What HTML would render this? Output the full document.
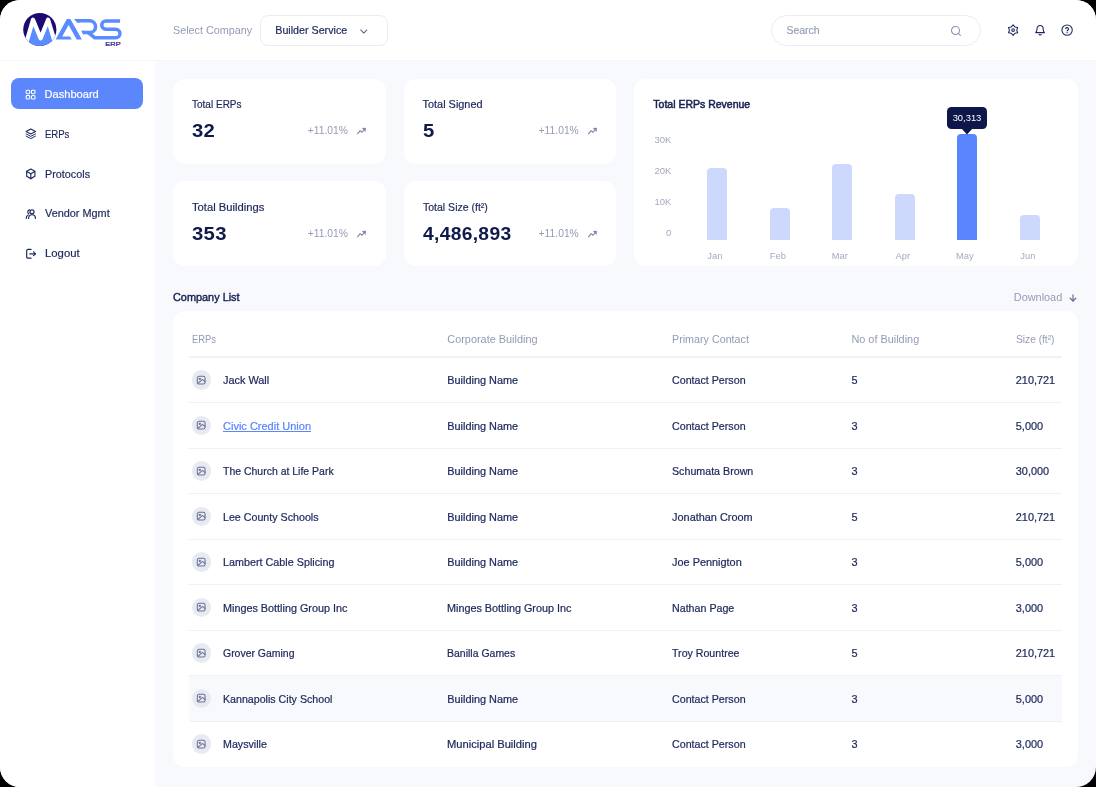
<!DOCTYPE html>
<html>
<head>
<meta charset="utf-8">
<title>MARS ERP Dashboard</title>
<style>
*{box-sizing:border-box;margin:0;padding:0}
html,body{width:1096px;height:787px;overflow:hidden;background:#000}
body{font-family:"Liberation Sans",sans-serif;font-size:11px;color:#1d285b;position:relative}
#app{will-change:transform;position:absolute;left:0;top:0;width:1096px;height:787px;background:#f8f9fd;border-radius:20px;overflow:hidden}
#header{position:absolute;left:0;top:0;width:1096px;height:61px;background:#fff;border-bottom:1px solid #f5f6fa}
#sidebar{position:absolute;left:0;top:61px;width:155px;height:726px;background:#fff}
.t{position:absolute;white-space:nowrap;line-height:14px;height:14px;font-size:10.9px}
.gray{color:#949bb5}
.card{position:absolute;background:#fff;border-radius:12px}
.nav{position:absolute;left:44.5px;font-size:11.1px;line-height:14px;white-space:nowrap;color:#1d285b;-webkit-text-stroke:0.2px currentColor}
.ico{position:absolute}
.big{position:absolute;font-weight:bold;font-size:18.6px;line-height:24px;color:#0f1a4a;white-space:nowrap;letter-spacing:0.3px;transform-origin:0 50%;transform:scaleX(1.09)}
.pct{position:absolute;font-size:10.3px;line-height:14px;color:#949bb5;white-space:nowrap}
.ylab{position:absolute;left:641px;width:30.3px;text-align:right;font-size:9.5px;line-height:12px;color:#a3a9c0}
.xlab{position:absolute;width:40px;text-align:center;font-size:9.4px;line-height:12px;color:#a5abc2;top:249.5px}
.bar{position:absolute;width:20px;background:#cdd9fc;border-radius:4px 4px 0 0}
.row{position:absolute;left:189px;width:873px;height:45.5px;border-top:1px solid #f0f1f6}
.c{position:absolute;line-height:14px;-webkit-text-stroke:0.22px currentColor;font-size:10.9px;white-space:nowrap;color:#1d285b}
.av{position:absolute;left:191.6px;width:19.5px;height:19.5px;border-radius:50%;background:#e8eaf1}
.av svg{position:absolute;left:4.4px;top:4.5px}
.th{position:absolute;top:331.7px;line-height:14px;font-size:10.9px;color:#949bb5;white-space:nowrap}
</style>
</head>
<body>
<div id="app">

<div id="header">

<svg class="ico" style="left:18px;top:8px" width="110" height="44" viewBox="18 8 110 44">
  <defs><clipPath id="lc"><circle cx="39.8" cy="29.5" r="16.6"/></clipPath></defs>
  <circle cx="39.8" cy="29.5" r="16.6" fill="#1c0a70"/>
  <g clip-path="url(#lc)">
    <polygon points="27.3,39.5 33,19.8 40.6,38.3 48.1,19.8 54.1,39.5 60,50 20,50" fill="#5b8cff"/>
    <polyline points="26.7,41.5 33,19.8 40.6,38.3 48.1,19.8 54.7,41.5" fill="none" stroke="#fff" stroke-width="4.3" stroke-linejoin="round" stroke-linecap="butt"/>
  </g>
  <polygon fill="#5b8cff" points="55.6,39.6 66.8,18.9 70.4,18.9 81.9,39.6 76.7,39.6 68.6,25.1 62.2,36.6 70.1,36.6 71.7,39.6"/>
  <polygon fill="#5b8cff" points="74,19 77,22.5 80,22.5 80,19"/>
  <g fill="none" stroke="#5b8cff" stroke-width="3.5" stroke-linejoin="round">
    <path d="M77,20.75 H90.2 A5.9,5.9 0 0 1 90.2,32.5 H82.6"/>
    <path d="M88.4,32.6 L94.8,37.85 H115.6 A4.35,4.35 0 0 0 115.6,29.15 H105.8 A4.1,4.1 0 0 1 105.8,20.95 H120.1"/>
  </g>
  <polygon fill="#5b8cff" points="81.2,30.75 83.2,34.25 84,34.25 84,30.75"/>
  <text x="105.3" y="45.8" font-family="Liberation Sans" font-weight="normal" stroke="#2a1a7c" stroke-width="0.18" font-size="5.3" fill="#2a1a7c" textLength="15.6" lengthAdjust="spacingAndGlyphs">ERP</text>
</svg>

<div class="t gray" style="left:173px;top:23px;font-size:10.8px">Select Company</div>
<div style="position:absolute;left:260px;top:15px;width:128px;height:30.5px;border:1px solid #ebedf4;border-radius:8px;background:#fff"></div>
<div class="t" style="left:275.3px;top:23px;font-size:10.7px;color:#1d285b;-webkit-text-stroke:0.2px #1d285b">Builder Service</div>
<svg class="ico" style="left:360.2px;top:28.7px" width="7.6" height="5" viewBox="0 0 10 6" fill="none" stroke="#5a6389" stroke-width="1.4" stroke-linecap="round" stroke-linejoin="round"><path d="M1 1 L5 5 L9 1"/></svg>
<div style="position:absolute;left:771px;top:15px;width:209.5px;height:30.5px;border:1px solid #ebedf4;border-radius:16px;background:#fff"></div>
<div class="t gray" style="left:786.4px;top:23px;font-size:10.5px;-webkit-text-stroke:0.15px currentColor">Search</div>
<svg class="ico" style="left:950px;top:24.6px" width="12" height="12" viewBox="0 0 24 24" fill="none" stroke="#8a91ae" stroke-width="2.1" stroke-linecap="round" stroke-linejoin="round"><circle cx="11" cy="11" r="8"/><path d="M21 21 L16.7 16.7"/></svg>
<svg class="ico" style="left:1006.6px;top:24.4px" width="12.2" height="12.2" viewBox="0 0 24 24" fill="none" stroke="#1d285b" stroke-width="2.1" stroke-linecap="round" stroke-linejoin="round"><circle cx="12" cy="12" r="2.6"/><path d="M12.00 1.60 L15.60 5.76 L21.01 6.80 L19.20 12.00 L21.01 17.20 L15.60 18.24 L12.00 22.40 L8.40 18.24 L2.99 17.20 L4.80 12.00 L2.99 6.80 L8.40 5.76 Z"/></svg>
<svg class="ico" style="left:1034.1px;top:24.4px" width="12.2" height="12.2" viewBox="0 0 24 24" fill="none" stroke="#1d285b" stroke-width="2.1" stroke-linecap="round" stroke-linejoin="round"><path d="M6 9 a6 6 0 0 1 12 0 c0 6 2.5 7.5 2.5 8 H3.5 c0 -0.5 2.5 -2 2.5 -8 Z"/><path d="M10 20.5 a2.2 2.2 0 0 0 4 0"/></svg>
<svg class="ico" style="left:1061.4px;top:24.4px" width="12.2" height="12.2" viewBox="0 0 24 24" fill="none" stroke="#1d285b" stroke-width="2.1" stroke-linecap="round" stroke-linejoin="round"><circle cx="12" cy="12" r="10.2"/><path d="M9.2 9.3 a2.9 2.9 0 0 1 5.7 0.8 c0 1.9 -2.9 2.2 -2.9 3.6"/><path d="M12 16.9 v0.2" stroke-width="2.6"/></svg>
</div>

<div id="sidebar"><div style="position:absolute;left:10.7px;top:17.4px;width:132.8px;height:30.7px;border-radius:8px;background:#5b86fc"></div><svg class="ico" style="left:25.2px;top:27.5px" width="11.2" height="11.2" viewBox="0 0 24 24" fill="none" stroke="#fff" stroke-width="2.3" stroke-linecap="round" stroke-linejoin="round"><rect x="2.5" y="2.5" width="7.6" height="7.6" rx="2"/><rect x="13.9" y="2.5" width="7.6" height="7.6" rx="2"/><rect x="2.5" y="13.9" width="7.6" height="7.6" rx="2"/><rect x="13.9" y="13.9" width="7.6" height="7.6" rx="2.2"/></svg><div class="nav" style="top:26.4px;color:#fff">Dashboard</div><svg class="ico" style="left:25px;top:67.3px" width="11.6" height="11.6" viewBox="0 0 24 24" fill="none" stroke="#1d285b" stroke-width="2.4" stroke-linecap="round" stroke-linejoin="round"><path d="M12 2.2 L21.8 7.4 L12 12.6 L2.2 7.4 Z" stroke-width="2.2"/><path d="M2.4 12.3 L12 17.3 L21.6 12.3" stroke-width="2"/><path d="M2.4 16.9 L12 21.9 L21.6 16.9" stroke-width="2"/></svg><div class="nav" style="top:65.8px;transform-origin:0 50%;transform:scaleX(0.86)">ERPs</div><svg class="ico" style="left:25px;top:107.00000000000001px" width="11.6" height="11.6" viewBox="0 0 24 24" fill="none" stroke="#1d285b" stroke-width="2.4" stroke-linecap="round" stroke-linejoin="round"><path d="M12 2 L20.5 6.8 V17.2 L12 22 L3.5 17.2 V6.8 Z"/><path d="M3.8 7 L12 11.8 L20.2 7"/><path d="M12 11.8 V22"/></svg><div class="nav" style="top:105.5px;transform-origin:0 50%;transform:scaleX(0.975)">Protocols</div><svg class="ico" style="left:25px;top:146.7px" width="11.6" height="11.6" viewBox="0 0 24 24" fill="none" stroke="#1d285b" stroke-width="2.4" stroke-linecap="round" stroke-linejoin="round"><circle cx="14.5" cy="8" r="4.2"/><path d="M7.5 21.5 c0 -5 3 -7.5 7 -7.5 s7 2.5 7 7.5"/><path d="M9.6 4 a4.2 4.2 0 0 0 -1.6 7.9"/><path d="M6.6 14.4 c-2.4 1 -4 3.4 -4 7"/></svg><div class="nav" style="top:145.2px;transform-origin:0 50%;transform:scaleX(0.98)">Vendor Mgmt</div><svg class="ico" style="left:25px;top:186.5px" width="11.6" height="11.6" viewBox="0 0 24 24" fill="none" stroke="#1d285b" stroke-width="2.4" stroke-linecap="round" stroke-linejoin="round"><path d="M12.5 3 H6 a2.5 2.5 0 0 0 -2.5 2.5 v13 A2.5 2.5 0 0 0 6 21 h6.5"/><path d="M10 12 H21.5"/><path d="M17.8 8.2 L21.6 12 L17.8 15.8"/></svg><div class="nav" style="top:185.0px;transform-origin:0 50%;transform:scaleX(1.02)">Logout</div></div>
<div class="card" style="left:173px;top:78.7px;width:212.6px;height:85px"><div class="t" style="left:18.8px;top:18.6px;font-size:10.9px;-webkit-text-stroke:0.2px currentColor;transform-origin:0 50%;transform:scaleX(0.92)">Total ERPs</div><div class="big" style="left:19px;top:40.2px">32</div><div class="pct" style="left:134.8px;top:45px">+11.01%</div><svg class="ico" style="left:183px;top:48px" width="11" height="8" viewBox="0 0 12 10" fill="none" stroke="#7880a3" stroke-width="1.3" stroke-linecap="round" stroke-linejoin="round"><path d="M1 8.5 L4.3 4.6 L6.6 6.6 L10.5 2"/><path d="M7.2 1.6 L11 1.4 L10.9 5.2 Z" fill="#7880a3" stroke-width="0.6"/></svg></div><div class="card" style="left:403.8px;top:78.7px;width:212.6px;height:85px"><div class="t" style="left:18.8px;top:18.6px;font-size:10.9px;-webkit-text-stroke:0.2px currentColor;transform-origin:0 50%;transform:scaleX(1.0)">Total Signed</div><div class="big" style="left:19px;top:40.2px">5</div><div class="pct" style="left:134.8px;top:45px">+11.01%</div><svg class="ico" style="left:183px;top:48px" width="11" height="8" viewBox="0 0 12 10" fill="none" stroke="#7880a3" stroke-width="1.3" stroke-linecap="round" stroke-linejoin="round"><path d="M1 8.5 L4.3 4.6 L6.6 6.6 L10.5 2"/><path d="M7.2 1.6 L11 1.4 L10.9 5.2 Z" fill="#7880a3" stroke-width="0.6"/></svg></div><div class="card" style="left:173px;top:181px;width:212.6px;height:85px"><div class="t" style="left:18.8px;top:19.200000000000003px;font-size:10.9px;-webkit-text-stroke:0.2px currentColor;transform-origin:0 50%;transform:scaleX(1.03)">Total Buildings</div><div class="big" style="left:19px;top:40.800000000000004px">353</div><div class="pct" style="left:134.8px;top:45.6px">+11.01%</div><svg class="ico" style="left:183px;top:48.6px" width="11" height="8" viewBox="0 0 12 10" fill="none" stroke="#7880a3" stroke-width="1.3" stroke-linecap="round" stroke-linejoin="round"><path d="M1 8.5 L4.3 4.6 L6.6 6.6 L10.5 2"/><path d="M7.2 1.6 L11 1.4 L10.9 5.2 Z" fill="#7880a3" stroke-width="0.6"/></svg></div><div class="card" style="left:403.8px;top:181px;width:212.6px;height:85px"><div class="t" style="left:18.8px;top:19.200000000000003px;font-size:10.9px;-webkit-text-stroke:0.2px currentColor;transform-origin:0 50%;transform:scaleX(0.965)">Total Size (ft&sup2;)</div><div class="big" style="left:19px;top:40.800000000000004px;transform:scaleX(1.035)">4,486,893</div><div class="pct" style="left:134.8px;top:45.6px">+11.01%</div><svg class="ico" style="left:183px;top:48.6px" width="11" height="8" viewBox="0 0 12 10" fill="none" stroke="#7880a3" stroke-width="1.3" stroke-linecap="round" stroke-linejoin="round"><path d="M1 8.5 L4.3 4.6 L6.6 6.6 L10.5 2"/><path d="M7.2 1.6 L11 1.4 L10.9 5.2 Z" fill="#7880a3" stroke-width="0.6"/></svg></div>
<div class="card" style="left:634.4px;top:78.7px;width:443.7px;height:187.4px"></div><div class="t" style="left:653.3px;top:97.3px;font-size:10.5px;color:#16204f;-webkit-text-stroke:0.5px #16204f">Total ERPs Revenue</div><div class="ylab" style="top:133.8px">30K</div><div class="ylab" style="top:165.0px">20K</div><div class="ylab" style="top:196.0px">10K</div><div class="ylab" style="top:227.0px">0</div><div class="bar" style="left:707px;top:168px;height:71.9px"></div><div class="xlab" style="left:694.9px">Jan</div><div class="bar" style="left:770px;top:208px;height:31.9px"></div><div class="xlab" style="left:757.9px">Feb</div><div class="bar" style="left:832px;top:164px;height:75.9px"></div><div class="xlab" style="left:819.9px">Mar</div><div class="bar" style="left:895px;top:194px;height:45.9px"></div><div class="xlab" style="left:882.9px">Apr</div><div class="bar" style="left:957px;top:134px;height:105.9px;background:#5b85fc"></div><div class="xlab" style="left:944.9px">May</div><div class="bar" style="left:1020px;top:215px;height:24.9px"></div><div class="xlab" style="left:1007.9px">Jun</div><div style="position:absolute;left:947.3px;top:107.4px;width:39.6px;height:21.2px;border-radius:4.5px;background:#0d1749"></div><svg class="ico" style="left:961px;top:128px" width="12" height="7" viewBox="0 0 12 7"><path d="M0 0 H12 L6 6.4 Z" fill="#0d1749"/></svg><div class="t" style="left:947px;top:110.8px;width:40px;text-align:center;color:#fff;font-size:9.4px;line-height:13px">30,313</div>
<div class="t" style="left:173px;top:290.2px;font-size:10.9px;color:#16204f;-webkit-text-stroke:0.4px #16204f">Company List</div><div class="t gray" style="left:1013.8px;top:290.3px;font-size:10.9px">Download</div><svg class="ico" style="left:1069px;top:293.6px" width="8" height="8" viewBox="0 0 10 10" fill="none" stroke="#666e94" stroke-width="1.5" stroke-linecap="round" stroke-linejoin="round"><path d="M5 1.2 V8.6"/><path d="M1.5 5.3 L5 8.8 L8.5 5.3"/></svg><div class="card" style="left:173px;top:311px;width:905px;height:456.3px"></div><div class="th" style="left:191.8px;transform-origin:0 50%;transform:scaleX(0.86)">ERPs</div><div class="th" style="left:447.3px;transform-origin:0 50%;transform:scaleX(1)">Corporate Building</div><div class="th" style="left:672.1px;transform-origin:0 50%;transform:scaleX(0.985)">Primary Contact</div><div class="th" style="left:851.4px;transform-origin:0 50%;transform:scaleX(1)">No of Building</div><div class="th" style="left:1015.8px;transform-origin:0 50%;transform:scaleX(0.935)">Size (ft&sup2;)</div><div style="position:absolute;left:189px;top:356px;width:873px;height:2px;background:#f0f1f6"></div><div class="av" style="top:370.45px"><svg width="10.4" height="10.4" viewBox="0 0 24 24" fill="none" stroke="#6a7396" stroke-width="2.4" stroke-linecap="round" stroke-linejoin="round"><rect x="3" y="3" width="18" height="18" rx="4"/><circle cx="8.8" cy="8.8" r="1.5"/><path d="M4.5 19.5 L13.6 11.2 Q15 10 16.4 11.2 L20.8 15"/></svg></div><div class="c" style="left:223px;top:373.0px;transform-origin:0 50%;transform:scaleX(1)">Jack Wall</div><div class="c" style="left:447.3px;top:373.0px">Building Name</div><div class="c" style="left:672.1px;top:373.0px;transform-origin:0 50%;transform:scaleX(0.98)">Contact Person</div><div class="c" style="left:851.4px;top:373.0px">5</div><div class="c" style="left:1015.8px;top:373.0px">210,721</div><div style="position:absolute;left:189px;top:402.0px;width:873px;height:1px;background:#f0f1f6"></div><div class="av" style="top:415.95px"><svg width="10.4" height="10.4" viewBox="0 0 24 24" fill="none" stroke="#6a7396" stroke-width="2.4" stroke-linecap="round" stroke-linejoin="round"><rect x="3" y="3" width="18" height="18" rx="4"/><circle cx="8.8" cy="8.8" r="1.5"/><path d="M4.5 19.5 L13.6 11.2 Q15 10 16.4 11.2 L20.8 15"/></svg></div><div class="c" style="left:223px;top:419.0px;color:#5b86fc;text-decoration:underline;transform-origin:0 50%;transform:scaleX(1.01)">Civic Credit Union</div><div class="c" style="left:447.3px;top:419.0px">Building Name</div><div class="c" style="left:672.1px;top:419.0px;transform-origin:0 50%;transform:scaleX(0.98)">Contact Person</div><div class="c" style="left:851.4px;top:419.0px">3</div><div class="c" style="left:1015.8px;top:419.0px">5,000</div><div style="position:absolute;left:189px;top:448.0px;width:873px;height:1px;background:#f0f1f6"></div><div class="av" style="top:461.45px"><svg width="10.4" height="10.4" viewBox="0 0 24 24" fill="none" stroke="#6a7396" stroke-width="2.4" stroke-linecap="round" stroke-linejoin="round"><rect x="3" y="3" width="18" height="18" rx="4"/><circle cx="8.8" cy="8.8" r="1.5"/><path d="M4.5 19.5 L13.6 11.2 Q15 10 16.4 11.2 L20.8 15"/></svg></div><div class="c" style="left:223px;top:464.0px;transform-origin:0 50%;transform:scaleX(0.962)">The Church at Life Park</div><div class="c" style="left:447.3px;top:464.0px">Building Name</div><div class="c" style="left:672.1px;top:464.0px;transform-origin:0 50%;transform:scaleX(0.98)">Schumata Brown</div><div class="c" style="left:851.4px;top:464.0px">3</div><div class="c" style="left:1015.8px;top:464.0px">30,000</div><div style="position:absolute;left:189px;top:493.0px;width:873px;height:1px;background:#f0f1f6"></div><div class="av" style="top:506.95px"><svg width="10.4" height="10.4" viewBox="0 0 24 24" fill="none" stroke="#6a7396" stroke-width="2.4" stroke-linecap="round" stroke-linejoin="round"><rect x="3" y="3" width="18" height="18" rx="4"/><circle cx="8.8" cy="8.8" r="1.5"/><path d="M4.5 19.5 L13.6 11.2 Q15 10 16.4 11.2 L20.8 15"/></svg></div><div class="c" style="left:223px;top:510.0px;transform-origin:0 50%;transform:scaleX(0.98)">Lee County Schools</div><div class="c" style="left:447.3px;top:510.0px">Building Name</div><div class="c" style="left:672.1px;top:510.0px">Jonathan Croom</div><div class="c" style="left:851.4px;top:510.0px">5</div><div class="c" style="left:1015.8px;top:510.0px">210,721</div><div style="position:absolute;left:189px;top:539.0px;width:873px;height:1px;background:#f0f1f6"></div><div class="av" style="top:552.45px"><svg width="10.4" height="10.4" viewBox="0 0 24 24" fill="none" stroke="#6a7396" stroke-width="2.4" stroke-linecap="round" stroke-linejoin="round"><rect x="3" y="3" width="18" height="18" rx="4"/><circle cx="8.8" cy="8.8" r="1.5"/><path d="M4.5 19.5 L13.6 11.2 Q15 10 16.4 11.2 L20.8 15"/></svg></div><div class="c" style="left:223px;top:555.0px;transform-origin:0 50%;transform:scaleX(0.99)">Lambert Cable Splicing</div><div class="c" style="left:447.3px;top:555.0px">Building Name</div><div class="c" style="left:672.1px;top:555.0px">Joe Pennigton</div><div class="c" style="left:851.4px;top:555.0px">3</div><div class="c" style="left:1015.8px;top:555.0px">5,000</div><div style="position:absolute;left:189px;top:584.0px;width:873px;height:1px;background:#f0f1f6"></div><div class="av" style="top:597.95px"><svg width="10.4" height="10.4" viewBox="0 0 24 24" fill="none" stroke="#6a7396" stroke-width="2.4" stroke-linecap="round" stroke-linejoin="round"><rect x="3" y="3" width="18" height="18" rx="4"/><circle cx="8.8" cy="8.8" r="1.5"/><path d="M4.5 19.5 L13.6 11.2 Q15 10 16.4 11.2 L20.8 15"/></svg></div><div class="c" style="left:223px;top:601.0px;transform-origin:0 50%;transform:scaleX(0.993)">Minges Bottling Group Inc</div><div class="c" style="left:447.3px;top:601.0px;transform-origin:0 50%;transform:scaleX(0.993)">Minges Bottling Group Inc</div><div class="c" style="left:672.1px;top:601.0px;transform-origin:0 50%;transform:scaleX(0.98)">Nathan Page</div><div class="c" style="left:851.4px;top:601.0px">3</div><div class="c" style="left:1015.8px;top:601.0px">3,000</div><div style="position:absolute;left:189px;top:630.0px;width:873px;height:1px;background:#f0f1f6"></div><div class="av" style="top:643.45px"><svg width="10.4" height="10.4" viewBox="0 0 24 24" fill="none" stroke="#6a7396" stroke-width="2.4" stroke-linecap="round" stroke-linejoin="round"><rect x="3" y="3" width="18" height="18" rx="4"/><circle cx="8.8" cy="8.8" r="1.5"/><path d="M4.5 19.5 L13.6 11.2 Q15 10 16.4 11.2 L20.8 15"/></svg></div><div class="c" style="left:223px;top:646.0px;transform-origin:0 50%;transform:scaleX(0.96)">Grover Gaming</div><div class="c" style="left:447.3px;top:646.0px;transform-origin:0 50%;transform:scaleX(0.963)">Banilla Games</div><div class="c" style="left:672.1px;top:646.0px;transform-origin:0 50%;transform:scaleX(0.975)">Troy Rountree</div><div class="c" style="left:851.4px;top:646.0px">5</div><div class="c" style="left:1015.8px;top:646.0px">210,721</div><div style="position:absolute;left:189px;top:676px;width:873px;height:45px;background:#f8f9fd"></div><div style="position:absolute;left:189px;top:675.0px;width:873px;height:1px;background:#f0f1f6"></div><div class="av" style="top:688.95px"><svg width="10.4" height="10.4" viewBox="0 0 24 24" fill="none" stroke="#6a7396" stroke-width="2.4" stroke-linecap="round" stroke-linejoin="round"><rect x="3" y="3" width="18" height="18" rx="4"/><circle cx="8.8" cy="8.8" r="1.5"/><path d="M4.5 19.5 L13.6 11.2 Q15 10 16.4 11.2 L20.8 15"/></svg></div><div class="c" style="left:223px;top:692.0px;transform-origin:0 50%;transform:scaleX(0.977)">Kannapolis City School</div><div class="c" style="left:447.3px;top:692.0px">Building Name</div><div class="c" style="left:672.1px;top:692.0px;transform-origin:0 50%;transform:scaleX(0.98)">Contact Person</div><div class="c" style="left:851.4px;top:692.0px">3</div><div class="c" style="left:1015.8px;top:692.0px">5,000</div><div style="position:absolute;left:189px;top:721.0px;width:873px;height:1px;background:#f0f1f6"></div><div class="av" style="top:734.45px"><svg width="10.4" height="10.4" viewBox="0 0 24 24" fill="none" stroke="#6a7396" stroke-width="2.4" stroke-linecap="round" stroke-linejoin="round"><rect x="3" y="3" width="18" height="18" rx="4"/><circle cx="8.8" cy="8.8" r="1.5"/><path d="M4.5 19.5 L13.6 11.2 Q15 10 16.4 11.2 L20.8 15"/></svg></div><div class="c" style="left:223px;top:737.0px;transform-origin:0 50%;transform:scaleX(0.98)">Maysville</div><div class="c" style="left:447.3px;top:737.0px;transform-origin:0 50%;transform:scaleX(1.024)">Municipal Building</div><div class="c" style="left:672.1px;top:737.0px;transform-origin:0 50%;transform:scaleX(0.98)">Contact Person</div><div class="c" style="left:851.4px;top:737.0px">3</div><div class="c" style="left:1015.8px;top:737.0px">3,000</div>
</div>
</body>
</html>
